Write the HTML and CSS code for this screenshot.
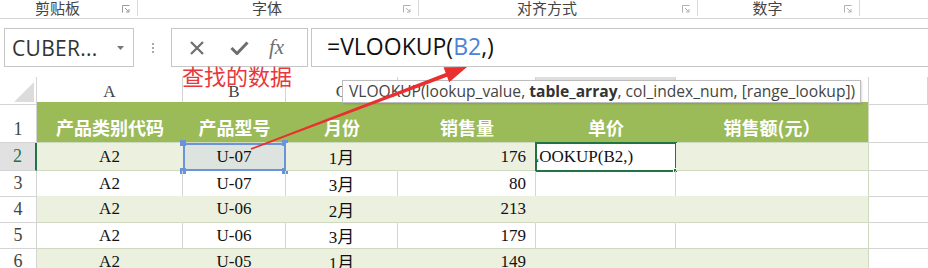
FILE: index.html
```html
<!DOCTYPE html>
<html lang="zh-CN">
<head>
  <meta charset="UTF-8" />
  <title>VLOOKUP 查找示例</title>
  <link rel="stylesheet" href="styles.css">
</head>
<body>

  <!-- ribbon group labels -->
  <div class="ribbon">
    <div class="group g1"><span class="glabel">剪贴板</span><span class="launch"><svg width="8" height="8" viewBox="0 0 8 8"><path d="M0.5 7.5V0.5H7.5" fill="none" stroke="#9a9a9a"/><path d="M3 3L7 7M7 4V7H4" fill="none" stroke="#9a9a9a"/></svg></span></div>
    <div class="group g2"><span class="glabel">字体</span><span class="launch"><svg width="8" height="8" viewBox="0 0 8 8"><path d="M0.5 7.5V0.5H7.5" fill="none" stroke="#b0b0b0"/><path d="M3 3L7 7M7 4V7H4" fill="none" stroke="#b0b0b0"/></svg></span></div>
    <div class="group g3"><span class="glabel">对齐方式</span><span class="launch"><svg width="8" height="8" viewBox="0 0 8 8"><path d="M0.5 7.5V0.5H7.5" fill="none" stroke="#b0b0b0"/><path d="M3 3L7 7M7 4V7H4" fill="none" stroke="#b0b0b0"/></svg></span></div>
    <div class="group g4"><span class="glabel">数字</span><span class="launch"><svg width="8" height="8" viewBox="0 0 8 8"><path d="M0.5 7.5V0.5H7.5" fill="none" stroke="#b0b0b0"/><path d="M3 3L7 7M7 4V7H4" fill="none" stroke="#b0b0b0"/></svg></span></div>
  </div>

  <!-- formula bar -->
  <div class="fbar">
    <div class="namebox">
      <span class="nametext">CUBER...</span>
      <svg class="caret" width="7" height="4" viewBox="0 0 7 4"><path d="M0 0H7L3.5 4Z" fill="#777"/></svg>
    </div>
    <div class="grip"><i></i><i></i><i></i></div>
    <div class="fbtns">
      <svg width="16" height="16" viewBox="0 0 16 16"><path d="M2 2L14 14M14 2L2 14" stroke="#6e6e6e" stroke-width="2.2"/></svg>
      <svg width="19" height="14" viewBox="0 0 19 14"><path d="M1.5 7L7 12.5L17.5 1.5" fill="none" stroke="#6e6e6e" stroke-width="3"/></svg>
      <span class="fx">fx</span>
    </div>
    <div class="fformula">=VLOOKUP(<span class="ref">B2</span>,)</div>
    <div class="note">查找的数据</div>
  </div>

  <!-- sheet -->
  <div class="sheet">
    <div class="row colhead">
      <div class="corner"><svg width="20" height="20" viewBox="0 0 20 20"><path d="M20 0V20H0Z" fill="#dcdcdc"/></svg></div>
      <div class="ch">A</div>
      <div class="ch">B</div>
      <div class="ch">C</div>
      <div class="ch"></div>
      <div class="ch sel"></div>
      <div class="ch"></div>
      <div class="ch"></div>
    </div>

    <div class="row r1">
      <div class="rh">1</div>
      <div class="th">产品类别代码</div>
      <div class="th">产品型号</div>
      <div class="th">月份</div>
      <div class="th">销售量</div>
      <div class="th">单价</div>
      <div class="th">销售额(元）</div>
      <div class="out"></div>
    </div>

    <div class="row band r2">
      <div class="rh sel">2</div>
      <div class="td">A2</div>
      <div class="td refcell">U-07<span class="h tl"></span><span class="h tr"></span><span class="h bl"></span><span class="h br"></span></div>
      <div class="td">1月</div>
      <div class="td num">176</div>
      <div class="td active"><span class="edit">=VLOOKUP(B2,)</span><span class="fill"></span></div>
      <div class="td"></div>
      <div class="out"></div>
    </div>

    <div class="row r3">
      <div class="rh">3</div>
      <div class="td">A2</div>
      <div class="td">U-07</div>
      <div class="td">3月</div>
      <div class="td num">80</div>
      <div class="td"></div>
      <div class="td"></div>
      <div class="out"></div>
    </div>

    <div class="row band r4">
      <div class="rh">4</div>
      <div class="td">A2</div>
      <div class="td">U-06</div>
      <div class="td">2月</div>
      <div class="td num">213</div>
      <div class="td"></div>
      <div class="td"></div>
      <div class="out"></div>
    </div>

    <div class="row r5">
      <div class="rh">5</div>
      <div class="td">A2</div>
      <div class="td">U-06</div>
      <div class="td">3月</div>
      <div class="td num">179</div>
      <div class="td"></div>
      <div class="td"></div>
      <div class="out"></div>
    </div>

    <div class="row band r6">
      <div class="rh">6</div>
      <div class="td">A2</div>
      <div class="td">U-05</div>
      <div class="td">1月</div>
      <div class="td num">149</div>
      <div class="td"></div>
      <div class="td"></div>
      <div class="out"></div>
    </div>
  </div>

  <!-- function tooltip -->
  <div class="tip">VLOOKUP(lookup_value, <b>table_array</b>, col_index_num, [range_lookup])</div>

  <!-- red pointer arrow -->
  <svg class="arrow" width="928" height="268" viewBox="0 0 928 268">
    <polygon points="467,67 449.2,82.3 447.1,76.7 251.3,149.7 250.7,148.3 445.7,72.9 443.6,67.3" fill="#ea2f2f"/>
  </svg>

</body>
</html>
```
FILE: styles.css
```css
* { box-sizing: border-box; }
body {
  margin: 0;
  width: 928px;
  height: 268px;
  overflow: hidden;
  position: relative;
  background: #fff;
  font-family: "Liberation Serif", "Noto Sans CJK SC", serif;
  color: #222;
}

/* ribbon */
.ribbon {
  display: flex;
  height: 19px;
  border-bottom: 1px solid #d5d5d5;
  background: #fff;
}
.group {
  display: flex;
  align-items: flex-start;
  border-right: 1px solid #d8d8d8;
  height: 16px;
}
.g1 { width: 138px; }
.g2 { width: 281px; }
.g3 { width: 279px; }
.g4 { width: 162px; }
.glabel {
  flex: 1;
  text-align: center;
  font-family: "Noto Sans CJK SC", sans-serif;
  font-size: 15px;
  line-height: 16px;
  color: #444;
}
.launch {
  width: 22px;
  display: flex;
  justify-content: center;
  padding-top: 5px;
}

/* formula bar */
.fbar {
  position: relative;
  display: flex;
  align-items: stretch;
  height: 58px;
  padding-top: 9px;
  padding-bottom: 10px;
}
.namebox {
  margin-left: 4px;
  width: 130px;
  border: 1px solid #c6c6c6;
  display: flex;
  align-items: center;
  padding-left: 7px;
  padding-right: 9px;
  justify-content: space-between;
}
.nametext {
  font-family: "Open Sans", sans-serif;
  font-size: 21px;
  color: #333;
  letter-spacing: 0.3px;
}
.grip {
  width: 37px;
  display: flex;
  flex-direction: column;
  align-items: center;
  justify-content: center;
  gap: 2px;
}
.grip i {
  display: block;
  width: 2px;
  height: 2px;
  background: #a8a8a8;
}
.fbtns {
  width: 137px;
  border: 1px solid #c6c6c6;
  display: flex;
  align-items: center;
  padding-left: 17px;
  gap: 25px;
}
.fx {
  font-family: "Liberation Serif", serif;
  font-style: italic;
  font-size: 21px;
  color: #6e6e6e;
  margin-left: -5px;
}
.fformula {
  flex: 1;
  margin-left: 3px;
  border: 1px solid #c6c6c6;
  border-right: none;
  font-family: "Open Sans", sans-serif;
  font-size: 23px;
  color: #111;
  padding-left: 15px;
  line-height: 35px;
}
.ref { color: #4f81d6; }
.note {
  position: absolute;
  left: 182px;
  top: 44px;
  font-family: "Noto Sans CJK SC", sans-serif;
  font-size: 22px;
  line-height: 24px;
  color: #e8383d;
}

/* sheet */
.row {
  display: grid;
  grid-template-columns: 37px 146px 103px 112px 138px 140px 193px 59px;
}
.colhead { height: 25px; }
.r1 { height: 41px; }
.r2 { height: 28px; }
.r3 { height: 25px; }
.r4 { height: 27px; }
.r5 { height: 26px; }
.r6 { height: 26px; }

.corner {
  display: flex;
  align-items: flex-end;
  justify-content: flex-end;
  padding: 0 2px 2px 0;
  border-right: 1px solid #d4d4d4;
  border-bottom: 1px solid #d4d4d4;
}
.ch {
  text-align: center;
  font-size: 17px;
  line-height: 25px;
  padding-top: 2px;
  color: #444;
  border-right: 1px solid #d4d4d4;
  border-bottom: 1px solid #d4d4d4;
}
.ch.sel { background: #dedede; border-bottom: 2px solid #217346; }

.rh {
  font-size: 18px;
  color: #444;
  text-align: center;
  border-right: 1px solid #d4d4d4;
  border-bottom: 1px solid #d4d4d4;
  display: flex;
  align-items: center;
  justify-content: center;
}
.r1 .rh { align-items: flex-end; padding-bottom: 2px; }
.rh.sel {
  background: #e1e1e1;
  color: #217346;
  border-right: 2px solid #217346;
}

.th {
  background: #9bbb59;
  color: #fff;
  font-family: "Noto Sans CJK SC", sans-serif;
  font-weight: bold;
  font-size: 18px;
  text-align: center;
  display: flex;
  align-items: flex-end;
  justify-content: center;
  padding-bottom: 2px;
  border-bottom: 1px solid #cfd9bf;
}
.r1 .th:nth-child(7) { border-right: 1px solid #cfd9bf; }

.td {
  position: relative;
  font-size: 17px;
  display: flex;
  align-items: center;
  justify-content: center;
  border-bottom: 1px solid #cfd9bf;
  border-right: 1px solid #d4d4d4;
  color: #111;
}
.td:nth-child(7) { border-right: 1px solid #cfd9bf; }
.td.num { justify-content: flex-end; padding-right: 9px; }
.band .td { background: #ebf1de; border-right-color: #ebf1de; }
.band .td:nth-child(7) { border-right-color: #cfd9bf; }
.out { border-bottom: 1px solid #d4d4d4; }

/* selected reference B2 */
.refcell {
  outline: 2px solid #6a93d9;
  outline-offset: -2px;
}
.band .refcell { background: #dde3df; }
.h {
  position: absolute;
  width: 6px;
  height: 6px;
  background: #6a93d9;
}
.tl { left: -3px; top: -3px; }
.tr { right: -3px; top: -3px; }
.bl { left: -3px; bottom: -4px; }
.br { right: -3px; bottom: -4px; }

/* active cell E2 */
.active {
  justify-content: flex-start;
  overflow: visible;
  outline: 2px solid #217346;
  outline-offset: -1px;
}
.band .active { background: #fff; }
.edit {
  display: block;
  width: 100%;
  overflow: hidden;
  white-space: nowrap;
  text-indent: -29px;
}
.fill {
  position: absolute;
  right: -3px;
  bottom: -3px;
  width: 5px;
  height: 5px;
  background: #217346;
  border: 1px solid #fff;
}

/* tooltip */
.tip {
  position: absolute;
  left: 342px;
  top: 80px;
  width: 519px;
  height: 23px;
  background: #fff;
  border: 1px solid #bcbcbc;
  box-shadow: 1px 1px 2px rgba(0,0,0,0.15);
  font-family: "Open Sans", sans-serif;
  font-size: 15.6px;
  line-height: 21px;
  color: #444;
  padding-left: 6px;
  white-space: nowrap;
}
.tip b { color: #333; }

.arrow {
  position: absolute;
  left: 0;
  top: 0;
  pointer-events: none;
}
```
